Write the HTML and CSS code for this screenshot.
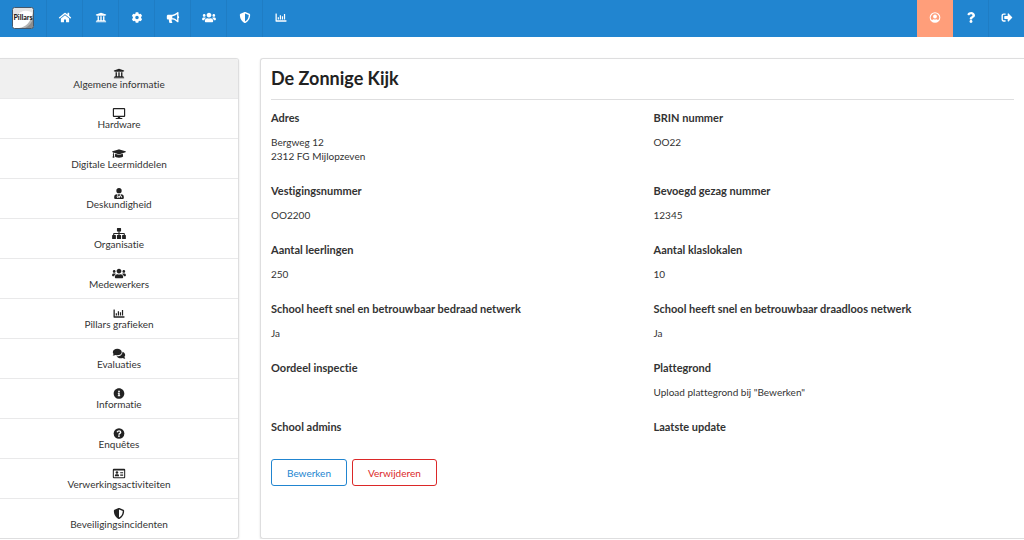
FILE: index.html
```html
<!DOCTYPE html>
<html lang="nl">
<head>
    <meta charset="UTF-8">
    <meta name="viewport" content="width=device-width, initial-scale=1.0">
    <title>Pillars - De Zonnige Kijk</title>
    <link rel="stylesheet" href="styles.css">
</head>
<body>

    <!-- Icons that are used below -->
    <svg class="sprite" aria-hidden="true">
        <symbol id="university" viewBox="0 0 512 512"><path d="M496 128v16a8 8 0 0 1-8 8h-24v12c0 6.627-5.373 12-12 12H60c-6.627 0-12-5.373-12-12v-12H24a8 8 0 0 1-8-8v-16a8 8 0 0 1 4.941-7.392l232-88a7.996 7.996 0 0 1 6.118 0l232 88A8 8 0 0 1 496 128zm-24 304H40c-13.255 0-24 10.745-24 24v16a8 8 0 0 0 8 8h464a8 8 0 0 0 8-8v-16c0-13.255-10.745-24-24-24zM96 192v192H60c-6.627 0-12 5.373-12 12v20h416v-20c0-6.627-5.373-12-12-12h-36V192h-64v192h-64V192h-64v192h-64V192H96z"/></symbol>
        <symbol id="home" viewBox="0 0 576 512"><path d="M288 150L96 308v156a16 16 0 0 0 16 16h112a16 16 0 0 0 16-16V352h96v112a16 16 0 0 0 16 16h112a16 16 0 0 0 16-16V308zM571 251l-87-72V44a12 12 0 0 0-12-12h-56a12 12 0 0 0-12 12v70l-85-70a48 48 0 0 0-61 0L5 251a12 12 0 0 0-2 17l26 31a12 12 0 0 0 17 2L288 104l242 197a12 12 0 0 0 17-2l25-31a12 12 0 0 0-1-17z"/></symbol>
        <symbol id="cog" viewBox="0 0 512 512"><path d="M487.4 315.7l-42.6-24.6c4.3-23.2 4.3-47 0-70.2l42.6-24.6c4.9-2.8 7.1-8.6 5.5-14-11.1-35.6-30-67.8-54.7-94.6-3.8-4.1-10-5.1-14.8-2.3L380.8 110c-17.9-15.4-38.5-27.3-60.8-35.1V25.8c0-5.6-3.9-10.5-9.4-11.7-36.7-8.2-74.3-7.8-109.2 0-5.5 1.2-9.4 6.1-9.4 11.7V75c-22.2 7.9-42.8 19.8-60.8 35.1L88.7 85.5c-4.9-2.8-11-1.9-14.8 2.3-24.7 26.7-43.6 58.9-54.7 94.6-1.7 5.4.6 11.2 5.5 14L67.3 221c-4.3 23.2-4.3 47 0 70.2l-42.6 24.6c-4.9 2.8-7.1 8.6-5.5 14 11.1 35.6 30 67.8 54.7 94.6 3.8 4.1 10 5.1 14.8 2.3l42.6-24.6c17.9 15.4 38.5 27.3 60.8 35.1v49.2c0 5.6 3.9 10.5 9.4 11.7 36.7 8.2 74.3 7.8 109.2 0 5.5-1.2 9.4-6.1 9.4-11.7v-49.2c22.2-7.9 42.8-19.8 60.8-35.1l42.6 24.6c4.9 2.8 11 1.9 14.8-2.3 24.7-26.7 43.6-58.9 54.7-94.6 1.5-5.5-.7-11.3-5.6-14.1zM256 336c-44.1 0-80-35.9-80-80s35.9-80 80-80 80 35.9 80 80-35.9 80-80 80z"/></symbol>
        <symbol id="bullhorn" viewBox="0 0 576 512"><path d="M576 240c0-23.63-12.95-44.04-32-55.12V32.01C544 23.26 537.02 0 512 0c-7.12 0-14.19 2.38-19.98 7.02l-85.03 68.03C364.28 109.19 310.66 128 256 128H64c-35.35 0-64 28.65-64 64v96c0 35.35 28.65 64 64 64h33.7c-1.39 10.48-2.18 21.14-2.18 32 0 39.77 9.26 77.35 25.56 110.94 5.19 10.69 16.52 17.06 28.4 17.06h74.28c26.05 0 41.69-29.84 25.9-50.56-16.4-21.52-26.15-48.36-26.15-77.44 0-11.11 1.62-21.79 4.41-32H256c54.66 0 108.28 18.81 150.98 52.95l85.03 68.03a32.023 32.023 0 0 0 19.98 7.02c24.92 0 32-22.78 32-32V295.13C563.05 284.04 576 263.63 576 240zm-96 141.42l-33.05-26.44C392.95 311.78 325.12 288 256 288v-96c69.12 0 136.95-23.78 190.95-66.98L480 98.58v282.84z"/></symbol>
        <symbol id="users" viewBox="0 0 640 512"><path d="M96 224c35.3 0 64-28.7 64-64s-28.7-64-64-64-64 28.7-64 64 28.7 64 64 64zm448 0c35.3 0 64-28.7 64-64s-28.7-64-64-64-64 28.7-64 64 28.7 64 64 64zm32 32h-64c-17.6 0-33.5 7.1-45.1 18.6 40.3 22.1 68.9 62 75.1 109.4h66c17.7 0 32-14.3 32-32v-32c0-35.3-28.7-64-64-64zm-256 0c61.9 0 112-50.1 112-112S381.9 32 320 32 208 82.1 208 144s50.1 112 112 112zm76.8 32h-8.3c-20.8 10-43.9 16-68.5 16s-47.6-6-68.5-16h-8.3C179.6 288 128 339.6 128 403.2V432c0 26.5 21.5 48 48 48h288c26.5 0 48-21.5 48-48v-28.8c0-63.6-51.6-115.2-115.2-115.2zm-223.7-13.4C161.5 263.1 145.6 256 128 256H64c-35.3 0-64 28.7-64 64v32c0 17.7 14.3 32 32 32h65.9c6.3-47.4 34.9-87.3 75.2-109.4z"/></symbol>
        <symbol id="shield" viewBox="0 0 512 512"><path d="M466.5 83.7l-192-80a48.15 48.15 0 0 0-36.9 0l-192 80C27.7 91.1 16 108.6 16 128c0 198.5 114.5 335.7 221.5 380.3 11.8 4.9 25.1 4.9 36.9 0C360.1 472.6 496 349.3 496 128c0-19.4-11.7-36.9-29.5-44.3zM256.1 446.3l-.1-381 175.9 73.3c-3.3 151.4-82.1 261.1-175.8 307.7z"/></symbol>
        <symbol id="chart" viewBox="0 0 512 512"><path d="M12 64h36a12 12 0 0 1 12 12v312h440a12 12 0 0 1 12 12v36a12 12 0 0 1-12 12H24a24 24 0 0 1-24-24V76a12 12 0 0 1 12-12zM104 240h56v112h-56zM200 150h56v202h-56zM296 200h56v152h-56zM392 96h56v256h-56z"/></symbol>
        <symbol id="user-circle" viewBox="0 0 512 512"><path fill-rule="evenodd" d="M256 8a248 248 0 1 0 0 496 248 248 0 0 0 0-496zM118 388a190 190 0 1 1 276 0c-18-34-48-50-78-50-20 8-40 12-60 12s-40-4-60-12c-30 0-60 16-78 50z"/><circle cx="256" cy="210" r="88"/></symbol>
        <symbol id="question" viewBox="0 0 384 512"><path d="M202.021 0C122.202 0 70.503 32.703 29.914 91.026c-7.363 10.58-5.093 25.086 5.178 32.874l43.138 32.709c10.373 7.865 25.132 6.026 33.253-4.148 25.049-31.381 43.63-49.449 82.757-49.449 30.764 0 68.816 19.799 68.816 49.631 0 22.552-18.617 34.134-48.993 51.164-35.423 19.86-82.299 44.576-82.299 106.405V320c0 13.255 10.745 24 24 24h72.471c13.255 0 24-10.745 24-24v-5.773c0-42.86 125.268-44.645 125.268-160.627C377.504 66.256 286.902 0 202.021 0zM192 373.459c-38.196 0-69.271 31.075-69.271 69.271 0 38.195 31.075 69.27 69.271 69.27s69.271-31.075 69.271-69.271-31.075-69.27-69.271-69.27z"/></symbol>
        <symbol id="sign-out" viewBox="0 0 512 512"><path d="M497 273L329 441c-15 15-41 4.5-41-17v-96H152c-13.3 0-24-10.7-24-24v-96c0-13.3 10.7-24 24-24h136V88c0-21.4 25.9-32 41-17l168 168c9.3 9.4 9.3 24.6 0 34zM192 436v-40c0-6.6-5.4-12-12-12H96c-17.7 0-32-14.3-32-32V160c0-17.7 14.3-32 32-32h84c6.6 0 12-5.4 12-12V76c0-6.6-5.4-12-12-12H96c-53 0-96 43-96 96v192c0 53 43 96 96 96h84c6.6 0 12-5.4 12-12z"/></symbol>
        <symbol id="desktop" viewBox="0 0 576 512"><path fill-rule="evenodd" d="M48 0h480a48 48 0 0 1 48 48v320a48 48 0 0 1-48 48H336l16 48h72a24 24 0 0 1 0 48H152a24 24 0 0 1 0-48h72l16-48H48a48 48 0 0 1-48-48V48A48 48 0 0 1 48 0zM56 56v304h464V56z"/></symbol>
        <symbol id="graduation" viewBox="0 0 640 512"><path d="M622 153L343 67a80 80 0 0 0-46 0L18 153c-24 7-24 40 0 47l49 15c-11 14-17 30-18 48a32 32 0 0 0-2 53L22 430c-2 9 5 18 15 18h54c10 0 17-9 15-18L81 316a32 32 0 0 0-1-52c1-16 9-29 22-38l195 60c15 5 30 5 46 0l279-86c24-7 24-40 0-47zM352 317c-31 9-56 3-64 0l-145-45-15 112c0 35 86 64 192 64s192-29 192-64l-15-112z"/></symbol>
        <symbol id="doctor" viewBox="0 0 448 512"><circle cx="224" cy="124" r="124"/><path fill-rule="evenodd" d="M130 288h20v68a52 52 0 1 0 32 0v-68h84v58a72 72 0 0 0-48 68v44h44v-44a44 44 0 0 1 72 0v44h36v-44a72 72 0 0 0-68-68v-58h16a130 130 0 0 1 130 130v50a44 44 0 0 1-44 44H44a44 44 0 0 1-44-44v-50a130 130 0 0 1 130-130zM166 384a20 20 0 1 0 0 40 20 20 0 0 0 0-40z"/></symbol>
        <symbol id="sitemap" viewBox="0 0 640 512"><path d="M248 0h144a24 24 0 0 1 24 24v120a24 24 0 0 1-24 24h-46v62h206a40 40 0 0 1 40 40v58h24a24 24 0 0 1 24 24v136a24 24 0 0 1-24 24H488a24 24 0 0 1-24-24V352a24 24 0 0 1 24-24h52v-46H346v46h46a24 24 0 0 1 24 24v136a24 24 0 0 1-24 24H248a24 24 0 0 1-24-24V352a24 24 0 0 1 24-24h46v-46H100v46h52a24 24 0 0 1 24 24v136a24 24 0 0 1-24 24H24a24 24 0 0 1-24-24V352a24 24 0 0 1 24-24h24v-58a40 40 0 0 1 40-40h206v-62h-46a24 24 0 0 1-24-24V24a24 24 0 0 1 24-24z"/></symbol>
        <symbol id="comments" viewBox="0 0 576 512"><path d="M416 192c0-88-93-160-208-160S0 104 0 192c0 34 14 66 38 92-13 30-36 54-36 54-3 3-3 7-2 10s5 6 8 6c44 0 80-16 106-34 28 10 60 16 94 16 115 0 208-72 208-144zM538 412c24-26 38-57 38-92 0-67-53-124-129-148 1 7 1 13 1 20 0 106-108 192-240 192-11 0-22-1-32-2 31 58 105 98 192 98 34 0 66-6 94-16 26 18 62 34 106 34 4 0 7-2 8-6 2-3 1-7-2-10 0 0-23-24-36-70z"/></symbol>
        <symbol id="info-circle" viewBox="0 0 512 512"><path d="M256 8C119.043 8 8 119.083 8 256c0 136.997 111.043 248 248 248s248-111.003 248-248C504 119.083 392.957 8 256 8zm0 110c23.196 0 42 18.804 42 42s-18.804 42-42 42-42-18.804-42-42 18.804-42 42-42zm56 254c0 6.627-5.373 12-12 12h-88c-6.627 0-12-5.373-12-12v-24c0-6.627 5.373-12 12-12h12v-64h-12c-6.627 0-12-5.373-12-12v-24c0-6.627 5.373-12 12-12h64c6.627 0 12 5.373 12 12v100h12c6.627 0 12 5.373 12 12v24z"/></symbol>
        <symbol id="question-circle" viewBox="0 0 512 512"><circle cx="256" cy="256" r="248"/><path fill="none" stroke="#fff" stroke-width="62" d="M166 202c18-48 50-66 92-66 44 0 78 26 78 64 0 54-82 52-82 112"/><circle cx="254" cy="376" r="42" fill="#fff"/></symbol>
        <symbol id="address-card" viewBox="0 0 576 512"><path fill-rule="evenodd" d="M48 32h480a48 48 0 0 1 48 48v352a48 48 0 0 1-48 48H48a48 48 0 0 1-48-48V80a48 48 0 0 1 48-48zM48 112v320h480V112z"/><circle cx="192" cy="212" r="60"/><path d="M96 384v-40a56 56 0 0 1 56-56h80a56 56 0 0 1 56 56v40zM344 192h136v40H344zM344 264h136v40H344zM344 336h136v36H344z"/></symbol>
    </svg>

    <nav class="topbar">
        <a href="#" class="logo">
            <svg viewBox="0 0 22 22" width="22" height="22" role="img" aria-label="Pillars">
                <rect x="0.5" y="0.5" width="21" height="21" rx="2" fill="#fff"/>
                <path d="M1 1h20v5C14 2 8 4 5 9L1 8z" fill="#e4e4e4"/>
                <path d="M21 5v16H7c7-1 12-6 14-16z" fill="#b4b4b4"/>
                <path d="M21 11v10h-8c4-2 7-5 8-10z" fill="#8d8d8d"/>
                <rect x="0.5" y="0.5" width="21" height="21" rx="2" fill="none" stroke="#45586b"/>
                <text x="11" y="13" text-anchor="middle" class="logo-text">Pillars</text>
            </svg>
        </a>
        <a href="#" class="nav-item" aria-label="Home"><svg class="icon"><use href="#home"/></svg></a>
        <a href="#" class="nav-item" aria-label="School"><svg class="icon"><use href="#university"/></svg></a>
        <a href="#" class="nav-item" aria-label="Instellingen"><svg class="icon"><use href="#cog"/></svg></a>
        <a href="#" class="nav-item" aria-label="Nieuws"><svg class="icon"><use href="#bullhorn"/></svg></a>
        <a href="#" class="nav-item" aria-label="Medewerkers"><svg class="icon"><use href="#users"/></svg></a>
        <a href="#" class="nav-item" aria-label="Beveiliging"><svg class="icon"><use href="#shield"/></svg></a>
        <a href="#" class="nav-item last" aria-label="Grafieken"><svg class="icon"><use href="#chart"/></svg></a>
        <div class="nav-right">
            <a href="#" class="nav-item profile" aria-label="Profiel"><svg class="icon"><use href="#user-circle"/></svg></a>
            <a href="#" class="nav-item" aria-label="Help"><svg class="icon"><use href="#question"/></svg></a>
            <a href="#" class="nav-item last" aria-label="Uitloggen"><svg class="icon"><use href="#sign-out"/></svg></a>
        </div>
    </nav>

    <div class="page">
        <aside class="side-menu">
            <a href="#" class="active"><svg class="icon"><use href="#university"/></svg>Algemene informatie</a>
            <a href="#"><svg class="icon"><use href="#desktop"/></svg>Hardware</a>
            <a href="#"><svg class="icon"><use href="#graduation"/></svg>Digitale Leermiddelen</a>
            <a href="#"><svg class="icon"><use href="#doctor"/></svg>Deskundigheid</a>
            <a href="#"><svg class="icon"><use href="#sitemap"/></svg>Organisatie</a>
            <a href="#"><svg class="icon"><use href="#users"/></svg>Medewerkers</a>
            <a href="#"><svg class="icon"><use href="#chart"/></svg>Pillars grafieken</a>
            <a href="#"><svg class="icon"><use href="#comments"/></svg>Evaluaties</a>
            <a href="#"><svg class="icon"><use href="#info-circle"/></svg>Informatie</a>
            <a href="#"><svg class="icon"><use href="#question-circle"/></svg>Enquêtes</a>
            <a href="#"><svg class="icon"><use href="#address-card"/></svg>Verwerkingsactiviteiten</a>
            <a href="#"><svg class="icon"><use href="#shield"/></svg>Beveiligingsincidenten</a>
        </aside>

        <main class="segment">
            <h1>De Zonnige Kijk</h1>
            <dl class="details">
                <div>
                    <dt>Adres</dt>
                    <dd>Bergweg 12<br>2312 FG Mijlopzeven</dd>
                </div>
                <div>
                    <dt>BRIN nummer</dt>
                    <dd>OO22</dd>
                </div>
                <div>
                    <dt>Vestigingsnummer</dt>
                    <dd>OO2200</dd>
                </div>
                <div>
                    <dt>Bevoegd gezag nummer</dt>
                    <dd>12345</dd>
                </div>
                <div>
                    <dt>Aantal leerlingen</dt>
                    <dd>250</dd>
                </div>
                <div>
                    <dt>Aantal klaslokalen</dt>
                    <dd>10</dd>
                </div>
                <div>
                    <dt>School heeft snel en betrouwbaar bedraad netwerk</dt>
                    <dd>Ja</dd>
                </div>
                <div>
                    <dt>School heeft snel en betrouwbaar draadloos netwerk</dt>
                    <dd>Ja</dd>
                </div>
                <div>
                    <dt>Oordeel inspectie</dt>
                    <dd></dd>
                </div>
                <div>
                    <dt>Plattegrond</dt>
                    <dd>Upload plattegrond bij "Bewerken"</dd>
                </div>
                <div>
                    <dt>School admins</dt>
                    <dd></dd>
                </div>
                <div>
                    <dt>Laatste update</dt>
                    <dd></dd>
                </div>
            </dl>
            <div class="actions">
                <button type="button" class="blue">Bewerken</button>
                <button type="button" class="red">Verwijderen</button>
            </div>
        </main>
    </div>

</body>
</html>
```
FILE: styles.css
```css
* {
    box-sizing: border-box;
}

body {
    margin: 0;
    font-family: Lato, "Liberation Sans", sans-serif;
    font-size: 10px;
    line-height: 14px;
    color: #333;
    background-color: #fff;
    font-variant-ligatures: none;
}

a {
    color: inherit;
    text-decoration: none;
}

.sprite {
    display: none;
}

.icon {
    display: block;
    width: 14px;
    height: 11px;
    fill: currentColor;
}

/* Top bar */
.topbar {
    display: flex;
    height: 37px;
    background-color: #2185d0;
    color: #fff;
}

.logo {
    display: flex;
    align-items: center;
    justify-content: center;
    width: 47px;
    padding-bottom: 2px;
    border-right: 1px solid #1f7dc4;
}

.logo-text {
    font-size: 7px;
    font-weight: 900;
    fill: #222;
}

.nav-item {
    display: flex;
    align-items: center;
    justify-content: center;
    width: 36px;
    padding-bottom: 2px;
    border-right: 1px solid #1f7dc4;
}

.nav-item.last {
    width: 35px;
    border-right: none;
}

.nav-right {
    display: flex;
    margin-left: auto;
}

.profile {
    background-color: #ff9e7a;
    border-right-color: #ff9e7a;
}

/* Page columns */
.page {
    display: grid;
    grid-template-columns: 239px 1fr;
    gap: 21px;
    margin-top: 21px;
}

/* Side menu */
.side-menu {
    border: 1px solid #dededf;
    border-left: none;
    border-radius: 0 3px 3px 0;
    box-shadow: 0 1px 2px rgba(34, 36, 38, 0.15);
    overflow: hidden;
}

.side-menu a {
    display: flex;
    flex-direction: column;
    align-items: center;
    height: 40px;
    padding-top: 9px;
    border-bottom: 1px solid #e9e9ea;
    line-height: 11px;
}

.side-menu a:last-child {
    height: 39px;
    border-bottom: none;
}

.side-menu .active {
    background-color: #f0f0f0;
}

.side-menu .icon {
    color: #222;
}

/* Content */
.segment {
    padding: 10px;
    border: 1px solid #dededf;
    border-right: none;
    border-radius: 3px 0 0 3px;
    box-shadow: 0 1px 2px rgba(34, 36, 38, 0.15);
}

h1 {
    margin: 0 0 10px;
    padding-bottom: 12px;
    border-bottom: 1px solid #dededf;
    font-size: 18px;
    line-height: 18px;
    color: #222;
}

.details {
    display: grid;
    grid-template-columns: 1fr 1fr;
    gap: 20px 22px;
    margin: 0;
}

dt {
    margin-bottom: 10px;
    font-size: 11px;
    font-weight: bold;
    line-height: 15px;
}

dd {
    min-height: 14px;
    margin: 0;
}

.actions {
    display: flex;
    gap: 5px;
    margin-top: 1px;
}

button {
    height: 27px;
    padding: 0 15px;
    border: 1px solid;
    border-radius: 3px;
    background-color: #fff;
    font-family: inherit;
    font-size: 10px;
    cursor: pointer;
}

.blue {
    color: #2185d0;
}

.red {
    color: #db2828;
}
```
